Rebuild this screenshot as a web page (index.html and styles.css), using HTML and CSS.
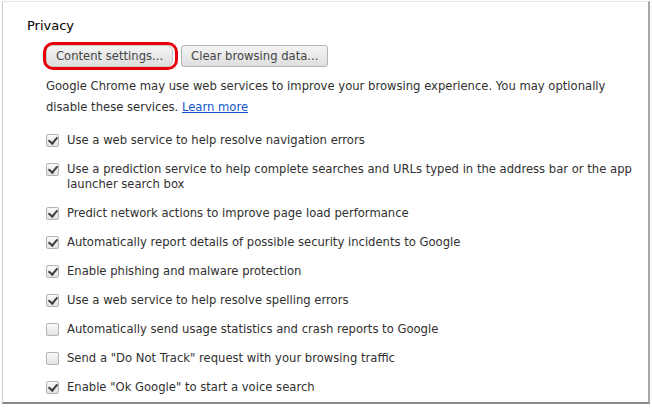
FILE: index.html
```html
<!DOCTYPE html>
<html lang="en">
<head>
  <meta charset="UTF-8">
  <title>Privacy settings</title>
  <link rel="stylesheet" href="styles.css">
</head>
<body>
  <div class="frame">
    <section class="privacy">
      <h3>Privacy</h3>
      <div class="content">
        <div class="buttons">
          <span class="highlight"><button type="button">Content settings...</button></span>
          <button type="button">Clear browsing data...</button>
        </div>
        <p class="intro">Google Chrome may use web services to improve your browsing experience. You may optionally disable these services. <a href="#">Learn more</a></p>

        <label class="option"><span class="box checked"></span><span>Use a web service to help resolve navigation errors</span></label>
        <label class="option"><span class="box checked"></span><span>Use a prediction service to help complete searches and URLs typed in the address bar or the app launcher search box</span></label>
        <label class="option"><span class="box checked"></span><span>Predict network actions to improve page load performance</span></label>
        <label class="option"><span class="box checked"></span><span>Automatically report details of possible security incidents to Google</span></label>
        <label class="option"><span class="box checked"></span><span>Enable phishing and malware protection</span></label>
        <label class="option"><span class="box checked"></span><span>Use a web service to help resolve spelling errors</span></label>
        <label class="option"><span class="box"></span><span>Automatically send usage statistics and crash reports to Google</span></label>
        <label class="option"><span class="box"></span><span>Send a "Do Not Track" request with your browsing traffic</span></label>
        <label class="option"><span class="box checked"></span><span>Enable "Ok Google" to start a voice search</span></label>
      </div>
    </section>
  </div>
</body>
</html>
```

FILE: styles.css
```css
body {
  margin: 0;
  background-color: #fff;
  font-family: "DejaVu Sans", sans-serif;
  color: #303030;
}

.frame {
  margin: 1px 2px 0 2px;
  height: 403px;
  box-sizing: border-box;
  border-top: 1px solid #e6e6e6;
  border-left: 1px solid #d0d0d0;
  border-right: 2px solid #a8a8a8;
  border-bottom: 2px solid #8a8a8a;
  box-shadow: 0 1px 1px rgba(0, 0, 0, 0.15);
}

.privacy {
  padding: 15px 0 0 24px;
}

h3 {
  margin: 0;
  font-size: 13px;
  font-weight: normal;
  color: #000;
  line-height: 18px;
}

.content {
  padding-left: 19px;
}

.buttons {
  display: flex;
  gap: 8px;
  margin-top: 10px;
  align-items: center;
}

/* red annotation ring drawn over the first button */
.highlight {
  display: inline-flex;
  position: relative;
}

.highlight::after {
  content: "";
  position: absolute;
  top: -3px;
  left: -3px;
  right: -5px;
  bottom: -3px;
  border: 3px solid #e8000b;
  border-radius: 10px;
  pointer-events: none;
}

button {
  font-family: inherit;
  font-size: 11.6px;
  color: #444;
  height: 22px;
  padding: 0 9px;
  background: linear-gradient(#f4f4f4, #dedede);
  border: 1px solid #b5b5b5;
  border-radius: 3px;
  cursor: pointer;
}

.highlight button {
  border-radius: 6px;
  border-color: #c8c8c8;
}

.intro {
  margin: 9px 0 0;
  font-size: 11.6px;
  line-height: 21px;
}

.intro a {
  color: #15c;
}

.option {
  display: flex;
  align-items: flex-start;
  margin-top: 14px;
  font-size: 11.6px;
  line-height: 15px;
}

.intro + .option {
  margin-top: 15px;
}

.option + .option {
  margin-top: 14px;
}

.box {
  flex: none;
  width: 11px;
  height: 11px;
  margin: 1px 8px 0 0;
  border: 1px solid #b4b4b4;
  border-radius: 2px;
  background: linear-gradient(#fafafa, #e2e2e2);
  position: relative;
}

.box.checked::after {
  content: "";
  position: absolute;
  left: 3px;
  top: 0;
  width: 4px;
  height: 7px;
  border: solid #404040;
  border-width: 0 2px 2px 0;
  transform: rotate(40deg);
}
```
